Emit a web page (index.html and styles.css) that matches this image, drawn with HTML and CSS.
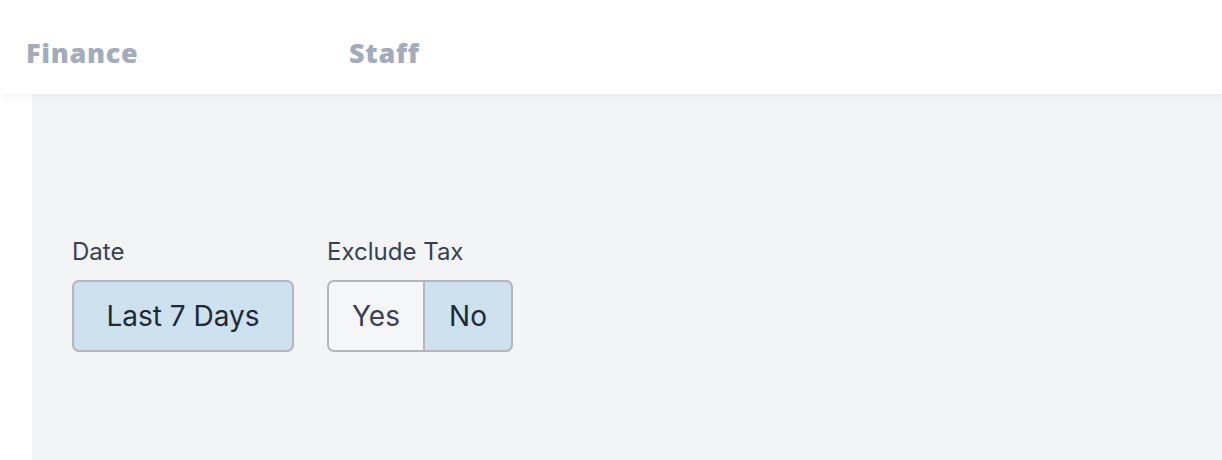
FILE: index.html
```html
<!DOCTYPE html>
<html>
<head>
<meta charset="utf-8">
<link rel="stylesheet" href="styles.css">
</head>
<body>
<header class="topbar">
  <nav class="tabs">
    <a class="tab">Finance</a>
    <a class="tab">Staff</a>
  </nav>
</header>
<main class="content">
  <div class="filters">
    <div class="field">
      <label class="label">Date</label>
      <button class="btn btn-active btn-date">Last 7 Days</button>
    </div>
    <div class="field">
      <label class="label">Exclude Tax</label>
      <div class="toggle">
        <button class="seg seg-yes">Yes</button>
        <button class="seg seg-no btn-active">No</button>
      </div>
    </div>
  </div>
</main>
</body>
</html>
```

FILE: styles.css
```css
html, body {
  margin: 0;
  padding: 0;
  background: #ffffff;
  height: 100%;
  overflow: hidden;
}
body {
  font-family: Inter, "Noto Sans", sans-serif;
}
.topbar {
  position: relative;
  z-index: 2;
  height: 94px;
  background: #fff;
  box-shadow: 0 2px 8px rgba(0, 0, 0, 0.06);
  display: flex;
  align-items: center;
}
.tabs {
  display: flex;
  padding-left: 26px;
  margin-top: 10px;
}
.tab {
  font-family: "Open Sans", sans-serif;
  font-weight: 800;
  font-size: 27px;
  color: #a2acbd;
  width: 323px;
  letter-spacing: 0.7px;
}
.content {
  margin-left: 32px;
  background: #f3f4f6;
  height: 366px;
  padding-top: 145px;
  padding-left: 40px;
  box-sizing: border-box;
}
.filters {
  display: flex;
  gap: 33px;
}
.field {
  display: flex;
  flex-direction: column;
}
.label {
  font-size: 24px;
  color: #374151;
  line-height: 26px;
  margin-bottom: 15px;
}
button {
  font-family: Inter, sans-serif;
  font-size: 28px;
  color: #1f2937;
  height: 72px;
  border: 2px solid #b4b6b9;
  border-radius: 7px;
  background: #f5f6f8;
  margin: 0;
  cursor: pointer;
}
.btn-active {
  background: #cde2ee;
}
.btn-date {
  width: 222px;
}
.toggle {
  display: flex;
}
.seg {
  color: #374151;
}
.seg-yes {
  width: 98px;
  border-radius: 7px 0 0 7px;
  border-right: 2px solid #b4b6b9;
}
.seg-no {
  width: 88px;
  border-left: none;
  border-radius: 0 7px 7px 0;
  color: #1f2937;
}
```
